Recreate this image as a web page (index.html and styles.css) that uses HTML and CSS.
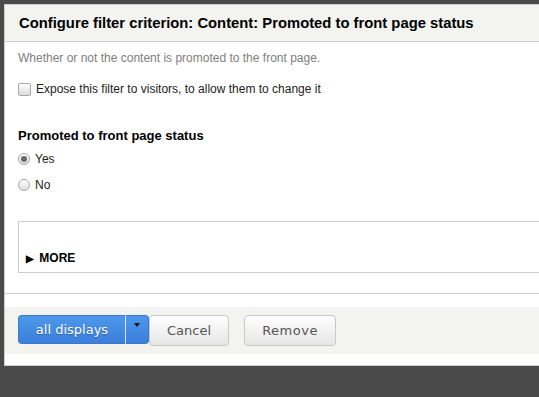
FILE: index.html
```html
<!DOCTYPE html>
<html lang="en">
<head>
    <meta charset="UTF-8">
    <meta name="viewport" content="width=device-width, initial-scale=1.0">
    <title>Configure filter criterion</title>
    <link rel="stylesheet" href="styles.css">
</head>
<body>
    <div class="dialog">
        <div class="dialog-title">Configure filter criterion: Content: Promoted to front page status</div>
        <div class="dialog-content">
            <p class="description">Whether or not the content is promoted to the front page.</p>
            <label class="check-row">
                <input type="checkbox" class="check">
                <span>Expose this filter to visitors, to allow them to change it</span>
            </label>
            <h3 class="field-title">Promoted to front page status</h3>
            <label class="radio-row">
                <input type="radio" name="promote" class="radio" checked>
                <span>Yes</span>
            </label>
            <label class="radio-row">
                <input type="radio" name="promote" class="radio">
                <span>No</span>
            </label>
            <div class="more-box">
                <span class="more-arrow">&#9654;</span> MORE
            </div>
        </div>
        <div class="button-pane">
            <div class="split-button">
                <button class="btn-primary">all displays</button>
                <button class="btn-arrow"><span class="caret"></span></button>
            </div>
            <button class="btn">Cancel</button>
            <button class="btn btn-remove">Remove</button>
        </div>
    </div>
</body>
</html>
```

FILE: styles.css
```css
html, body {
    margin: 0;
    height: 100%;
}
body {
    background-color: #4a4a4a;
    font-family: 'Liberation Sans', Arial, sans-serif;
    overflow: hidden;
}
.dialog {
    margin: 4px 0 0 4px;
    width: 560px;
    background-color: #ffffff;
    border: 1px solid #cfcfcf;
    border-right: none;
}
.dialog-title {
    background-color: #f3f3ef;
    border-bottom: 1px solid #cccccc;
    height: 36px;
    line-height: 36px;
    padding-left: 14px;
    font-size: 14.8px;
    font-weight: bold;
    color: #000000;
}
.dialog-content {
    padding: 0 13px 20px 13px;
    border-bottom: 1px solid #cccccc;
}
.description {
    margin: 0;
    padding-top: 8px;
    font-size: 12px;
    line-height: 16px;
    color: #808080;
}
.check-row, .radio-row {
    display: flex;
    align-items: center;
    gap: 5px;
    font-size: 12px;
    color: #222222;
}
.check-row {
    margin-top: 15px;
    height: 16px;
}
.check, .radio {
    appearance: none;
    -webkit-appearance: none;
    margin: 0;
    width: 12px;
    height: 12px;
    border: 1px solid #a9a9a9;
    background: linear-gradient(#ffffff, #dcdcdc);
    box-sizing: border-box;
}
.check {
    border-radius: 2px;
    width: 13px;
    height: 13px;
}
.radio {
    border-radius: 50%;
    position: relative;
}
.radio:checked::after {
    content: '';
    position: absolute;
    left: 2px;
    top: 2px;
    width: 6px;
    height: 6px;
    border-radius: 50%;
    background-color: #6a6a6a;
}
.field-title {
    margin: 31px 0 0 0;
    font-size: 13px;
    line-height: 16px;
    color: #000000;
}
.radio-row {
    height: 16px;
    margin-top: 7px;
}
.radio-row + .radio-row {
    margin-top: 10px;
}
.more-box {
    margin-top: 28px;
    border: 1px solid #cccccc;
    padding: 28px 7px 5px 7px;
    font-size: 12px;
    line-height: 16px;
    font-weight: bold;
    color: #000000;
}
.more-arrow {
    font-size: 10px;
    margin-right: 2px;
}
.button-pane {
    margin: 13px 0 11px 0;
    background-color: #f3f3ef;
    padding: 8px 13px 8px 13px;
    display: flex;
    align-items: flex-start;
    gap: 14px;
}
.split-button {
    display: flex;
    margin-right: -14px;
}
button {
    font-family: 'DejaVu Sans', Verdana, sans-serif;
    font-size: 13px;
    cursor: pointer;
}
.btn-primary, .btn-arrow {
    height: 29px;
    color: #ffffff;
    background: linear-gradient(#4d98ea, #3b7fdb);
    border: 1px solid #3a7ad0;
    text-shadow: 0 1px 1px rgba(0, 0, 0, 0.3);
}
.btn-primary {
    width: 108px;
    border-radius: 4px 0 0 4px;
    border-right: 1px solid #d7e6f8;
}
.btn-arrow {
    width: 23px;
    border-left: none;
    border-radius: 0 4px 4px 0;
    padding: 0;
    display: flex;
    justify-content: center;
    padding-top: 7px;
}
.caret {
    width: 0;
    height: 0;
    border-left: 3px solid transparent;
    border-right: 3px solid transparent;
    border-top: 4px solid #111111;
}
.btn {
    height: 31px;
    color: #555555;
    background: linear-gradient(#fefefe, #e6e6e6);
    border: 1px solid #c8c8c8;
    border-radius: 4px;
    padding: 0 17px;
}
.btn-remove {
    letter-spacing: 0.5px;
    width: 92px;
    margin-left: 1px;
}
```
